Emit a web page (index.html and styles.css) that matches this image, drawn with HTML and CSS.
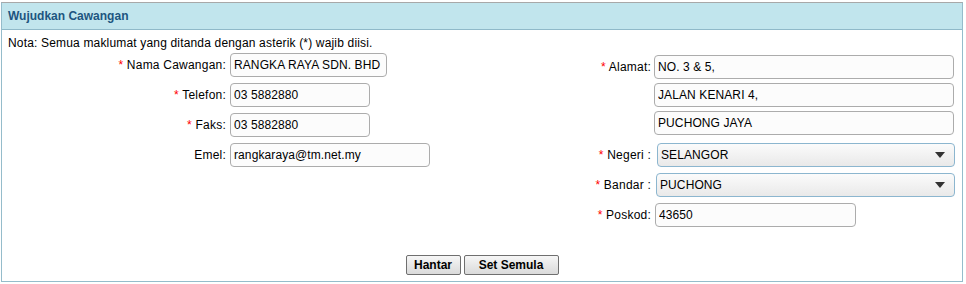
FILE: index.html
```html
<!DOCTYPE html>
<html lang="ms">
<head>
<meta charset="utf-8">
<title>Wujudkan Cawangan</title>
<link rel="stylesheet" href="styles.css">
</head>
<body>
<div class="panel">
  <div class="panel-head">Wujudkan Cawangan</div>
  <div class="note">Nota: Semua maklumat yang ditanda dengan asterik (*) wajib diisi.</div>
  <div class="form">
    <div class="col col-left">
      <div class="row">
        <label class="lbl"><span class="req">*</span> Nama Cawangan:</label>
        <input class="inp w157" type="text" value="RANGKA RAYA SDN. BHD">
      </div>
      <div class="row">
        <label class="lbl"><span class="req">*</span> Telefon:</label>
        <input class="inp w140" type="text" value="03 5882880">
      </div>
      <div class="row">
        <label class="lbl"><span class="req">*</span> Faks:</label>
        <input class="inp w140" type="text" value="03 5882880">
      </div>
      <div class="row">
        <label class="lbl">Emel:</label>
        <input class="inp w200" type="text" value="rangkaraya@tm.net.my">
      </div>
    </div>
    <div class="col col-right">
      <div class="addr">
        <div class="row-r">
          <label class="lbl-r"><span class="req">*</span> Alamat:</label>
          <input class="inp w300" type="text" value="NO. 3 &amp; 5,">
        </div>
        <div class="row-r">
          <span class="lbl-r"></span>
          <input class="inp w300" type="text" value="JALAN KENARI 4,">
        </div>
        <div class="row-r">
          <span class="lbl-r"></span>
          <input class="inp w300" type="text" value="PUCHONG JAYA">
        </div>
      </div>
      <div class="loc">
        <div class="row-r">
          <label class="lbl-r"><span class="req">*</span> Negeri :</label>
          <div class="sel sel-negeri">
            <span>SELANGOR</span>
            <svg class="caret" width="10" height="6" viewBox="0 0 10 6"><path d="M0 0H10L5 6Z" fill="#333"/></svg>
          </div>
        </div>
        <div class="row-r">
          <label class="lbl-r"><span class="req">*</span> Bandar :</label>
          <div class="sel sel-bandar">
            <span>PUCHONG</span>
            <svg class="caret" width="10" height="6" viewBox="0 0 10 6"><path d="M0 0H10L5 6Z" fill="#333"/></svg>
          </div>
        </div>
        <div class="row-r">
          <label class="lbl-r"><span class="req">*</span> Poskod:</label>
          <input class="inp w201 poskod" type="text" value="43650">
        </div>
      </div>
    </div>
  </div>
  <div class="actions">
    <button class="btn btn-send" type="button">Hantar</button>
    <button class="btn btn-reset" type="button">Set Semula</button>
  </div>
</div>
</body>
</html>
```

FILE: styles.css
```css
* { box-sizing: border-box; }

html, body {
  margin: 0;
  padding: 0;
  background: #ffffff;
}

body {
  font-family: "Liberation Sans", Arial, sans-serif;
  font-size: 12px;
  color: #000;
}

.panel {
  width: 962px;
  margin: 2px 0 0 1px;
  border: 1px solid #95bccb;
  border-top-color: #a8a8a8;
  padding-bottom: 6px;
}

.panel-head {
  height: 27px;
  line-height: 26px;
  background: #c1e5ed;
  border-bottom: 1px solid #8fb9c9;
  padding-left: 6px;
  font-weight: bold;
  font-size: 12px;
  color: #1d5580;
}

.note {
  padding: 5px 6px 0;
  line-height: 16px;
  letter-spacing: 0.17px;
}

.form {
  display: flex;
}

.col-left {
  width: 558px;
  display: flex;
  flex-direction: column;
  gap: 6px;
  padding-top: 2px;
}

.row {
  display: flex;
  align-items: center;
  gap: 4px;
  height: 24px;
}

.lbl {
  width: 224px;
  text-align: right;
  letter-spacing: 0.22px;
}

.req {
  color: #f00;
}

.col-right {
  display: flex;
  flex-direction: column;
  padding-top: 4px;
  gap: 8px;
}

.addr {
  display: flex;
  flex-direction: column;
  gap: 4px;
}

.loc {
  display: flex;
  flex-direction: column;
  gap: 6px;
}

.row-r {
  display: flex;
  align-items: center;
  gap: 3px;
  height: 24px;
}

.lbl-r {
  width: 91px;
  text-align: right;
  letter-spacing: 0.22px;
}

.inp {
  height: 24px;
  border: 1px solid #acacac;
  border-radius: 4px;
  background: #fcfcfc;
  font-family: "Liberation Sans", Arial, sans-serif;
  font-size: 12px;
  letter-spacing: 0.1px;
  color: #000;
  padding: 0 3px;
  margin: 0;
  outline: none;
}

.w140 { width: 140px; }
.w157 { width: 157px; }
.w200 { width: 200px; }
.w201 { width: 201px; }
.w300 { width: 300px; }

.poskod { margin-left: 1px; }

.sel {
  height: 24px;
  width: 298px;
  display: flex;
  align-items: center;
  justify-content: space-between;
  border: 1px solid #8cb6cf;
  border-radius: 4px;
  background: linear-gradient(#fbfbfb, #e9e9e9);
  padding: 0 9px 0 3px;
  letter-spacing: 0.1px;
}

.sel-negeri { margin-left: 3px; width: 298px; }
.sel-bandar { margin-left: 2px; width: 299px; }

.caret { display: block; }

.actions {
  display: flex;
  justify-content: center;
  gap: 3px;
  margin-top: 28px;
}

.btn {
  height: 20px;
  border: 1px solid #6f6f6f;
  border-radius: 2px;
  background: linear-gradient(#f6f6f6, #dadada);
  font-family: "Liberation Sans", Arial, sans-serif;
  font-weight: bold;
  font-size: 12px;
  color: #000;
  padding: 0;
  margin: 0;
}

.btn-send { width: 55px; }
.btn-reset { width: 95px; }
```
